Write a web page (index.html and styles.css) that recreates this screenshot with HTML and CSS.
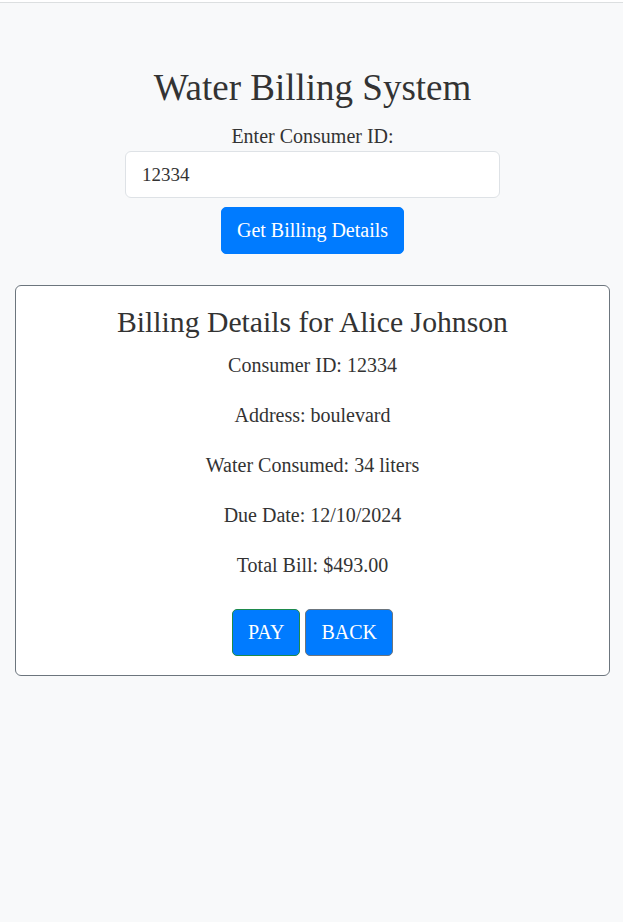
FILE: index.html
```html
<!DOCTYPE html>
<html>
<head>
<meta charset="utf-8">
<title>Water Billing System</title>
<link rel="stylesheet" href="styles.css">
</head>
<body>
<div class="topbar"></div>
<main class="page">
  <h1 class="title">Water Billing System</h1>
  <form class="lookup">
    <label class="lookup-label" for="cid">Enter Consumer ID:</label>
    <input class="lookup-input" id="cid" type="text" value="12334">
    <button class="btn btn-primary" type="button">Get Billing Details</button>
  </form>
  <section class="card">
    <h2 class="card-title">Billing Details for Alice Johnson</h2>
    <p class="detail">Consumer ID: 12334</p>
    <p class="detail">Address: boulevard</p>
    <p class="detail">Water Consumed: 34 liters</p>
    <p class="detail">Due Date: 12/10/2024</p>
    <p class="detail">Total Bill: $493.00</p>
    <div class="actions">
      <button class="btn btn-pay" type="button">PAY</button>
      <button class="btn btn-back" type="button">BACK</button>
    </div>
  </section>
</main>
</body>
</html>
```
FILE: styles.css
```css
html, body {
  margin: 0;
  padding: 0;
}
body {
  background: #f8f9fa;
  color: #333;
  font-family: "Liberation Serif", "Times New Roman", serif;
  font-size: 20px;
}
.topbar {
  height: 2px;
  background: #fff;
  border-bottom: 1px solid #dcdfe0;
}
.page {
  padding: 0 13px 0 15px;
  text-align: center;
}
.title {
  margin: 0;
  padding-top: 64px;
  font-size: 37px;
  font-weight: normal;
  line-height: 42px;
}
.lookup {
  display: flex;
  flex-direction: column;
  align-items: center;
  margin-top: 16px;
}
.lookup-label {
  line-height: 22px;
}
.lookup-input {
  box-sizing: border-box;
  width: 375px;
  height: 47px;
  margin-top: 4px;
  padding: 0 16px;
  border: 1px solid #dee2e6;
  border-radius: 6px;
  background: #fff;
  font-family: inherit;
  font-size: 19px;
  color: #333;
  outline: none;
}
.btn {
  box-sizing: border-box;
  height: 47px;
  padding: 0 15px;
  border: 1px solid #007bff;
  border-radius: 5px;
  background: #007bff;
  color: #fff;
  font-family: inherit;
  font-size: 20px;
  cursor: pointer;
}
.btn-primary {
  margin-top: 9px;
}
.card {
  margin-top: 31px;
  padding: 20px 20px 19px;
  border: 1px solid #6c757d;
  border-radius: 6px;
  background: #fff;
}
.card-title {
  margin: 0;
  font-size: 29.7px;
  font-weight: normal;
  line-height: 32px;
}
.detail {
  margin: 11px 0 0;
  line-height: 32px;
}
.detail + .detail {
  margin-top: 18px;
}
.actions {
  display: flex;
  justify-content: center;
  gap: 5px;
  margin-top: 28px;
}
.btn-pay {
  border-color: #1e8a4c;
}
.btn-back {
  border-color: #6c757d;
}
```
